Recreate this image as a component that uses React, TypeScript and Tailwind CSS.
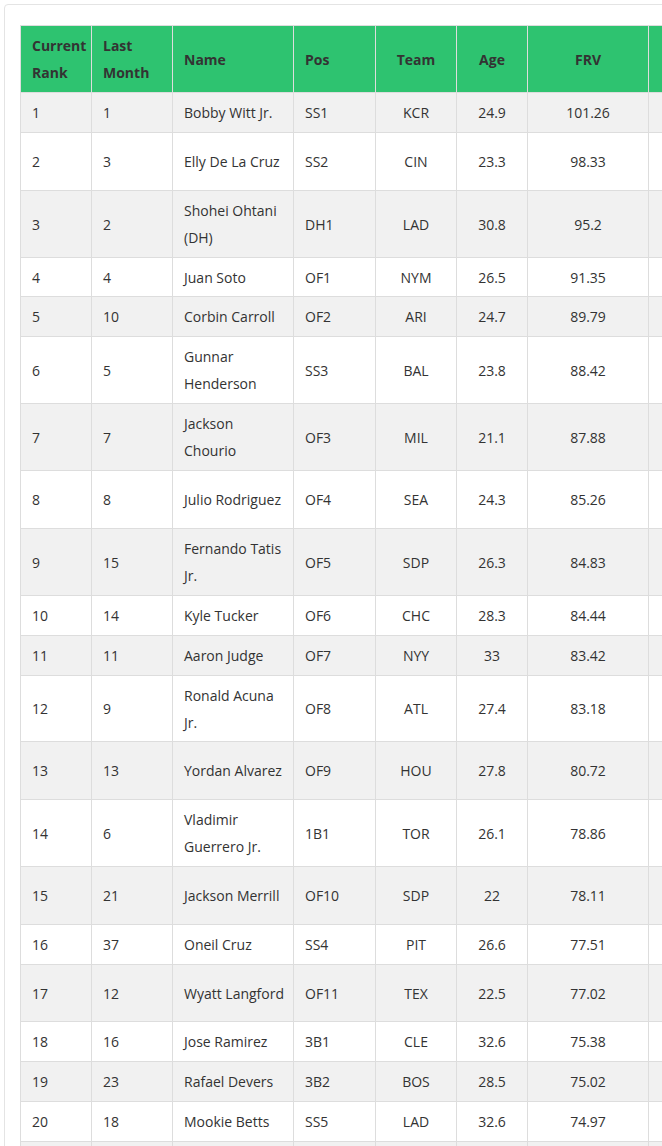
import React from "react";

type Row = [string, string, string, string, string, string, string, number];

const rows: Row[] = [
  ["1", "1", "Bobby Witt Jr.", "SS1", "KCR", "24.9", "101.26", 40],
  ["2", "3", "Elly De La Cruz", "SS2", "CIN", "23.3", "98.33", 58],
  ["3", "2", "Shohei Ohtani (DH)", "DH1", "LAD", "30.8", "95.2", 67],
  ["4", "4", "Juan Soto", "OF1", "NYM", "26.5", "91.35", 39],
  ["5", "10", "Corbin Carroll", "OF2", "ARI", "24.7", "89.79", 40],
  ["6", "5", "Gunnar Henderson", "SS3", "BAL", "23.8", "88.42", 67],
  ["7", "7", "Jackson Chourio", "OF3", "MIL", "21.1", "87.88", 67],
  ["8", "8", "Julio Rodriguez", "OF4", "SEA", "24.3", "85.26", 58],
  ["9", "15", "Fernando Tatis Jr.", "OF5", "SDP", "26.3", "84.83", 67],
  ["10", "14", "Kyle Tucker", "OF6", "CHC", "28.3", "84.44", 40],
  ["11", "11", "Aaron Judge", "OF7", "NYY", "33", "83.42", 40],
  ["12", "9", "Ronald Acuna Jr.", "OF8", "ATL", "27.4", "83.18", 66],
  ["13", "13", "Yordan Alvarez", "OF9", "HOU", "27.8", "80.72", 58],
  ["14", "6", "Vladimir Guerrero Jr.", "1B1", "TOR", "26.1", "78.86", 67],
  ["15", "21", "Jackson Merrill", "OF10", "SDP", "22", "78.11", 58],
  ["16", "37", "Oneil Cruz", "SS4", "PIT", "26.6", "77.51", 40],
  ["17", "12", "Wyatt Langford", "OF11", "TEX", "22.5", "77.02", 57],
  ["18", "16", "Jose Ramirez", "3B1", "CLE", "32.6", "75.38", 40],
  ["19", "23", "Rafael Devers", "3B2", "BOS", "28.5", "75.02", 40],
  ["20", "18", "Mookie Betts", "SS5", "LAD", "32.6", "74.97", 40],
  ["21", "19", "Francisco Lindor", "SS6", "NYM", "31.2", "74.5", 40],
];

const L = "border border-[#dddddd] pl-[11px] pr-[6px] py-0 align-middle text-left";
const C = "border border-[#dddddd] px-[8px] py-0 align-middle text-center";

export default function App() {
  return (
    <div
      className="w-[662px] h-[1146px] overflow-hidden bg-white text-[#333333]"
      style={{ fontFamily: '"Open Sans", "Noto Sans", sans-serif' }}
    >
      <div className="pl-[4px] pt-[4px]">
        <div className="w-[900px] border border-[#e4e4e4] rounded-[4px] pl-[15px] pt-[20px] pb-[20px]">
          <table className="w-[729px] border-collapse table-fixed text-[14px] leading-[27px]">
            <colgroup>
              <col className="w-[71px]" />
              <col className="w-[81px]" />
              <col className="w-[121px]" />
              <col className="w-[82px]" />
              <col className="w-[81px]" />
              <col className="w-[71px]" />
              <col className="w-[121px]" />
              <col className="w-[101px]" />
            </colgroup>
            <thead>
              <tr className="bg-[#2ec370] h-[67px] font-semibold text-[#333333]">
                <th className={L}>Current Rank</th>
                <th className={L}>Last Month</th>
                <th className={L}>Name</th>
                <th className={L}>Pos</th>
                <th className={C}>Team</th>
                <th className={C}>Age</th>
                <th className={C}>FRV</th>
                <th className={C}></th>
              </tr>
            </thead>
            <tbody>
              {rows.map((r, i) => (
                <tr
                  key={r[0]}
                  className={i % 2 === 0 ? "bg-[#f1f1f1]" : "bg-white"}
                  style={{ height: r[7] }}
                >
                  <td className={L}>{r[0]}</td>
                  <td className={L}>{r[1]}</td>
                  <td className={L}>{r[2]}</td>
                  <td className={L}>{r[3]}</td>
                  <td className={C}>{r[4]}</td>
                  <td className={C}>{r[5]}</td>
                  <td className={C}>{r[6]}</td>
                  <td className={C}></td>
                </tr>
              ))}
            </tbody>
          </table>
        </div>
      </div>
    </div>
  );
}
